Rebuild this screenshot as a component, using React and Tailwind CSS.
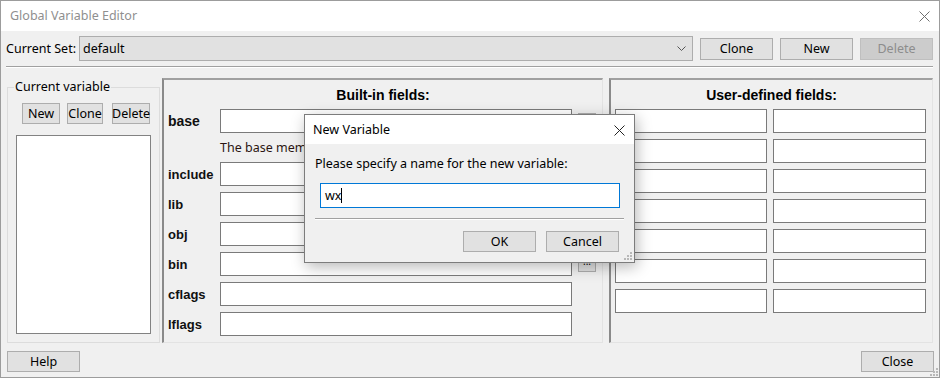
import React from 'react';

function Btn({ children, className = '', disabled = false }) {
  return (
    <div
      className={`flex items-center justify-center border pt-[2px] text-[12.5px] leading-none ${
        disabled ? 'border-[#bfbfbf] bg-[#cccccc] text-[#8d8d8d]' : 'border-[#adadad] bg-[#e1e1e1] text-black'
      } ${className}`}
    >
      {children}
    </div>
  );
}

function CloseX({ className = '' }) {
  return (
    <svg width="11" height="11" viewBox="0 0 11 11" className={className}>
      <path d="M0.5 0.5 L10.5 10.5 M10.5 0.5 L0.5 10.5" stroke="currentColor" strokeWidth="1" />
    </svg>
  );
}

function Grip({ className = '' }) {
  return (
    <svg width="9" height="9" viewBox="0 0 9 9" className={className}>
      {[[7, 1], [4, 4], [7, 4], [1, 7], [4, 7], [7, 7]].map(([x, y], i) => (
        <rect key={i} x={x} y={y} width="2" height="2" fill="#b8b8b8" />
      ))}
    </svg>
  );
}

const builtIn = ['include', 'lib', 'obj', 'bin', 'cflags', 'lflags'];

function Field({ label, big, dots }) {
  return (
    <div className="flex h-[24px] pl-[4px]">
      <span
        className={`flex w-[52px] items-center pt-[1px] font-['Liberation_Sans',sans-serif] font-bold text-[#101010] ${
          big ? 'text-[14px]' : 'text-[13px]'
        }`}
      >
        {label}
      </span>
      <div className="h-[24px] w-[352px] border border-[#7a7a7a] bg-white" />
      {dots && (
        <div className="ml-[6px] mt-[4px] flex h-[16px] w-[18px] items-start justify-center border border-[#adadad] bg-[#e1e1e1] text-[10px] leading-[9px] text-black">
          ...
        </div>
      )}
    </div>
  );
}

export default function App() {
  return (
    <div className="relative h-[378px] w-[940px] overflow-hidden bg-white font-['Noto_Sans',sans-serif] text-[12.5px] text-black">
      <div className="flex h-[378px] w-[940px] flex-col border border-[#9c9c9c] bg-[#f0f0f0]">
        {/* Title bar */}
        <div className="flex h-[30px] items-center justify-between bg-white pl-[9px] pr-[9px]">
          <span className="text-[12.5px] text-[#8f8f8f]">Global Variable Editor</span>
          <CloseX className="text-[#6f6f6f]" />
        </div>

        {/* Current set row */}
        <div className="mt-[5px] flex h-[25px] items-center pl-[5px]">
          <span className="w-[73px] pt-[2px]">Current Set:</span>
          <div className="flex h-[25px] w-[614px] items-center justify-between border border-[#adadad] bg-[#e1e1e1] pl-[3px] pr-[6px]">
            <span className="pt-[2px]">default</span>
            <svg width="9" height="5" viewBox="0 0 9 5">
              <path d="M0.5 0.5 L4.5 4.5 L8.5 0.5" stroke="#555" fill="none" />
            </svg>
          </div>
          <Btn className="ml-[7px] h-[22px] w-[73px]">Clone</Btn>
          <Btn className="ml-[7px] h-[22px] w-[73px]">New</Btn>
          <Btn disabled className="ml-[7px] h-[22px] w-[73px]">Delete</Btn>
        </div>

        <div className="ml-[5px] mt-[5px] h-px w-[927px] bg-[#a0a0a0]" />
        <div className="ml-[5px] h-px w-[927px] bg-white" />

        {/* Main area */}
        <div className="mt-[10px] flex h-[265px]">
          {/* Current variable group */}
          <div className="relative ml-[6px] mt-[9px] flex h-[256px] w-[153px] flex-col border border-[#dcdcdc]">
            <span className="absolute left-[6px] top-[-10px] bg-[#f0f0f0] px-[1px] leading-[18px]">Current variable</span>
            <div className="mt-[15px] flex">
              <Btn className="ml-[14px] h-[21px] w-[38px]">New</Btn>
              <Btn className="ml-[7px] h-[21px] w-[36px]">Clone</Btn>
              <Btn className="ml-[9px] h-[21px] w-[38px]">Delete</Btn>
            </div>
            <div className="ml-[8px] mt-[11px] h-[199px] w-[135px] border border-[#828282] bg-white" />
          </div>

          {/* Built-in fields */}
          <div className="ml-[2px] flex h-[265px] w-[441px] flex-col border-b border-l-2 border-r border-t-2 border-b-[#e3e3e3] border-l-[#8a8a8a] border-r-[#e3e3e3] border-t-[#a0a0a0]">
            <div className="flex h-[29px] items-center justify-center pt-[1px] font-['Liberation_Sans',sans-serif] text-[14px] font-bold">
              Built-in fields:
            </div>
            <Field label="base" big dots />
            <div className="flex h-[29px] items-center pl-[56px] pt-[1px] text-[#2b1510]">
              The base member of this variable
            </div>
            <div className="flex flex-col gap-[6px]">
              {builtIn.map((f) => (
                <Field key={f} label={f} dots={f === 'bin'} />
              ))}
            </div>
          </div>

          {/* User-defined fields */}
          <div className="ml-[6px] flex h-[265px] w-[324px] flex-col border-b border-l-2 border-r border-t-2 border-b-[#e3e3e3] border-l-[#8a8a8a] border-r-[#e3e3e3] border-t-[#a0a0a0]">
            <div className="flex h-[29px] items-center justify-center pt-[1px] font-['Liberation_Sans',sans-serif] text-[14px] font-bold">
              User-defined fields:
            </div>
            <div className="grid grid-cols-[152px_153px] gap-x-[6px] gap-y-[6px] pl-[4px]">
              {Array.from({ length: 14 }).map((_, i) => (
                <div key={i} className="h-[24px] border border-[#7a7a7a] bg-white" />
              ))}
            </div>
          </div>
        </div>

        {/* Bottom buttons */}
        <div className="mt-[8px] flex h-[21px] items-center justify-between pl-[6px] pr-[5px]">
          <Btn className="h-[21px] w-[73px]">Help</Btn>
          <Btn className="h-[21px] w-[73px]">Close</Btn>
        </div>
      </div>
      <Grip className="absolute bottom-[2px] right-[2px]" />

      {/* New Variable dialog */}
      <div className="absolute left-[304px] top-[114px] flex h-[149px] w-[331px] flex-col border border-[#7c7c7c] bg-[#f0f0f0] shadow-[2px_4px_14px_rgba(0,0,0,0.28)]">
        <div className="flex h-[29px] items-center justify-between bg-white pl-[8px] pr-[9px] pt-[2px]">
          <span>New Variable</span>
          <CloseX className="text-[#222]" />
        </div>
        <div className="ml-[10px] mt-[10px] pt-[1px] leading-[18px]">Please specify a name for the new variable:</div>
        <div className="ml-[15px] mt-[10px] flex h-[25px] w-[300px] items-center border border-[#0078d7] bg-white pl-[4px]">
          <span className="pt-[1px]">wx</span>
          <span className="h-[15px] w-px bg-black" />
        </div>
        <div className="ml-[10px] mt-[10px] h-px w-[309px] bg-[#a0a0a0]" />
        <div className="ml-[10px] h-px w-[309px] bg-white" />
        <div className="mt-[11px] flex justify-end gap-[10px] pr-[15px]">
          <Btn className="h-[21px] w-[73px]">OK</Btn>
          <Btn className="h-[21px] w-[73px]">Cancel</Btn>
        </div>
        <Grip className="absolute bottom-[2px] right-[2px]" />
      </div>
    </div>
  );
}
